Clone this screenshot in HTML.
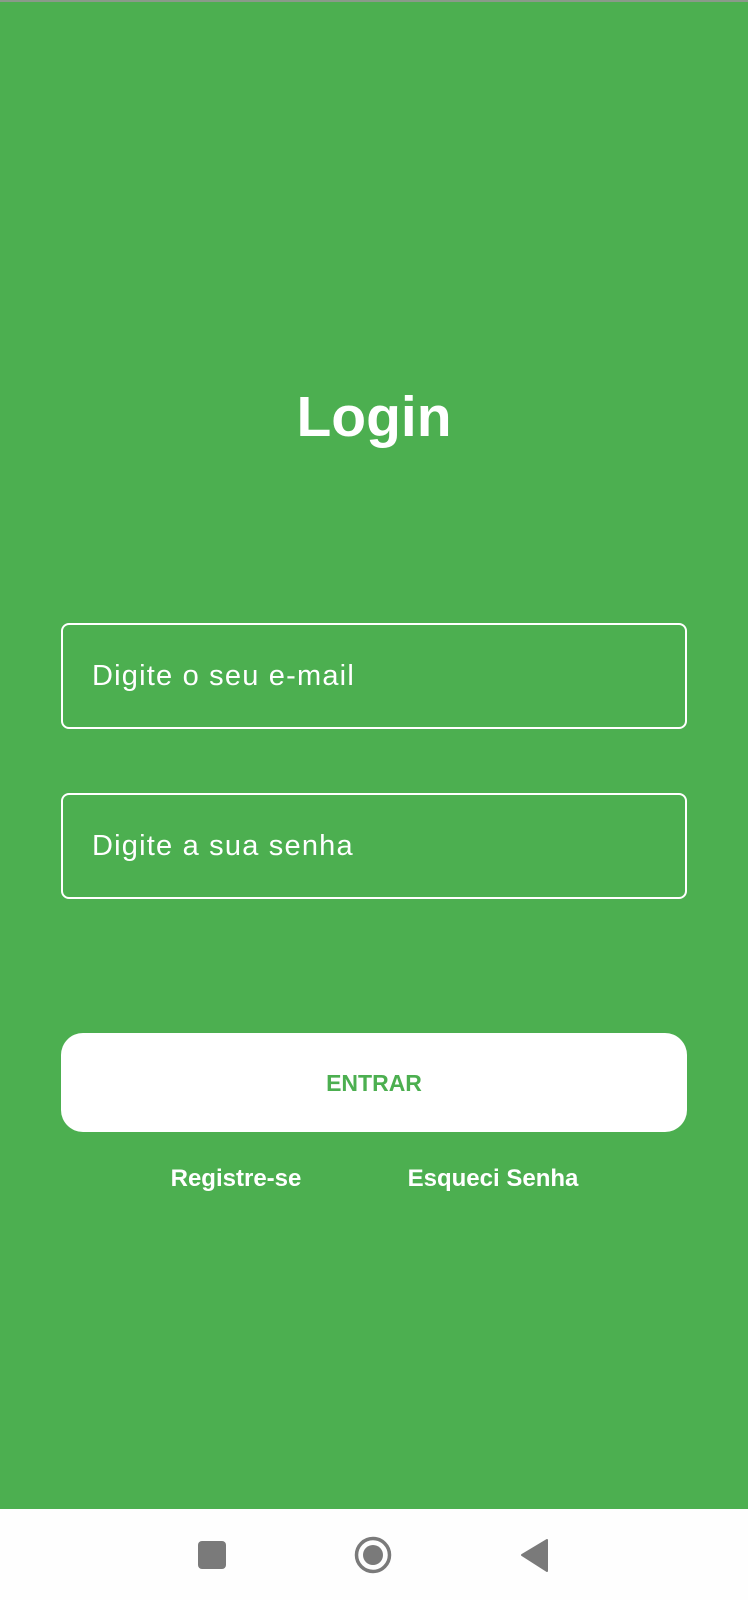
<!DOCTYPE html>
<html><head><meta charset="utf-8"><style>
*{margin:0;padding:0;box-sizing:border-box}
body{width:748px;height:1600px;position:relative;overflow:hidden;background:#4CAF50;font-family:"Liberation Sans",sans-serif}
.t{position:absolute;white-space:nowrap;color:#fff}
.f{position:absolute;left:61px;width:626px;border:2px solid #fff;border-radius:8px}
.nav{position:absolute;left:0;top:1509px;width:748px;height:91px;background:#fefefe}
</style></head><body>
<div style="position:absolute;top:0;left:0;width:748px;height:2px;background:#8a9a8a"></div>
<div class="t" style="left:0;width:748px;text-align:center;top:384px;font-size:57px;font-weight:bold;line-height:66px">Login</div>
<div class="f" style="top:623px;height:106px"></div>
<div class="t" style="left:92px;top:659px;font-size:29px;line-height:34px;letter-spacing:1.2px">Digite o seu e-mail</div>
<div class="f" style="top:793px;height:106px"></div>
<div class="t" style="left:92px;top:829px;font-size:29px;line-height:34px;letter-spacing:1.2px">Digite a sua senha</div>
<div style="position:absolute;left:61px;top:1033px;width:626px;height:99px;background:#fff;border-radius:22px"></div>
<div class="t" style="left:61px;width:626px;text-align:center;top:1068px;font-size:23px;font-weight:bold;line-height:30px;color:#4CAF50">ENTRAR</div>
<div class="t" style="left:136px;width:200px;text-align:center;top:1164px;font-size:24px;font-weight:bold;line-height:30px">Registre-se</div>
<div class="t" style="left:393px;width:200px;text-align:center;top:1164px;font-size:24px;font-weight:bold;line-height:30px">Esqueci Senha</div>
<div class="nav">
<svg width="748" height="91" style="position:absolute;left:0;top:0">
<rect x="198" y="32" width="28" height="28" rx="4" fill="#7a7a7a"/>
<circle cx="373" cy="46" r="16.5" fill="none" stroke="#7a7a7a" stroke-width="3.5"/>
<circle cx="373" cy="46" r="10" fill="#7a7a7a"/>
<path d="M547 31 L547 62 L522 46 Z" fill="#7a7a7a" stroke="#7a7a7a" stroke-width="2" stroke-linejoin="round"/>
</svg>
</div>
</body></html>
